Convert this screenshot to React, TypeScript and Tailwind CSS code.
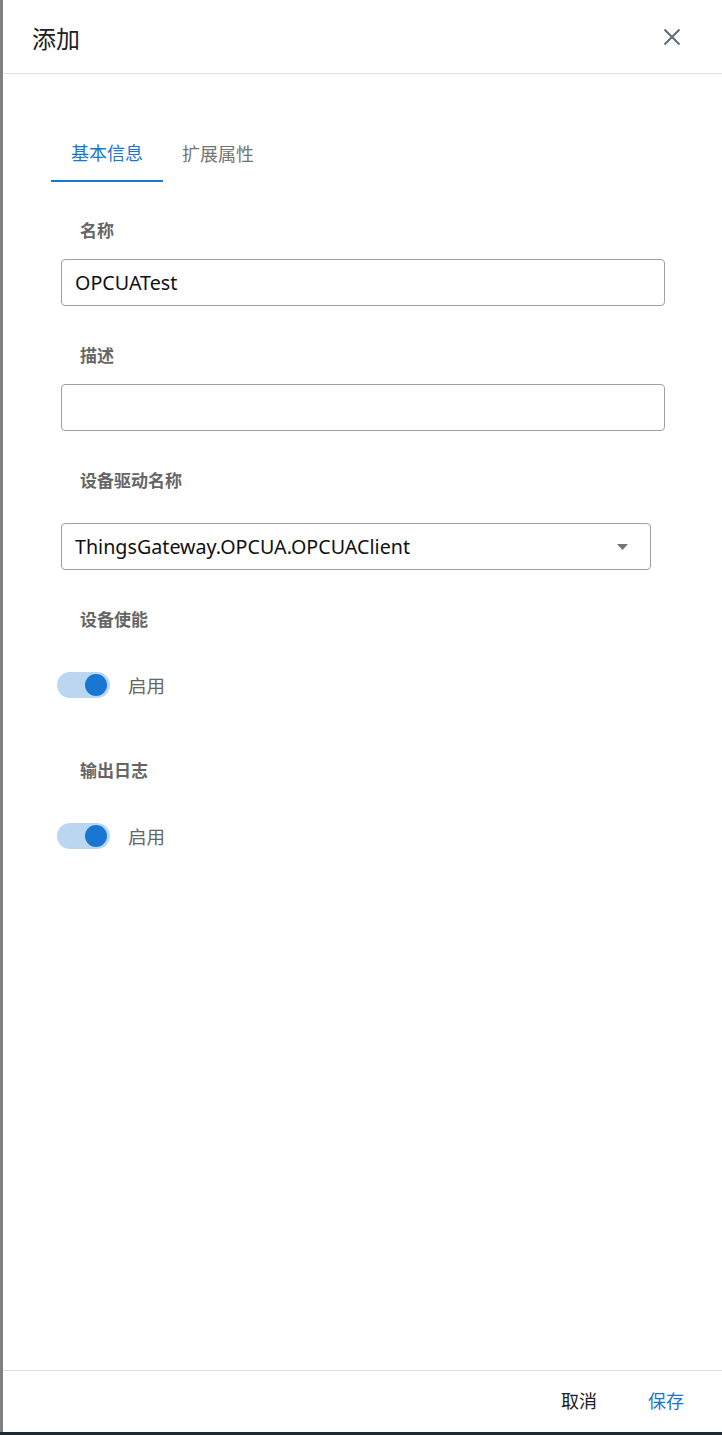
import React from "react";

const F = { fontFamily: '"Noto Sans", "Noto Sans CJK SC", sans-serif' };

function Label({ children, mt }: { children: React.ReactNode; mt: string }) {
  return (
    <div className={`${mt} pl-[77px] h-[24px] leading-[24px] text-[17px] font-bold text-[#666666]`}>{children}</div>
  );
}

function Toggle({ mt }: { mt: string }) {
  return (
    <div className={`${mt} flex items-center pl-[54px] h-[26px]`}>
      <div className="relative w-[53px] h-[26px] rounded-full bg-[#bad6f1]">
        <div className="absolute right-[3px] top-[2px] w-[22px] h-[22px] rounded-full bg-[#1976d2]" />
      </div>
      <span className="ml-[18px] text-[18.5px] text-[#666666] leading-[26px] mt-[2px]">启用</span>
    </div>
  );
}

export default function App() {
  return (
    <div className="w-[722px] h-[1435px] flex flex-col bg-white overflow-hidden" style={F}>
      <div className="flex flex-1 min-h-0">
        <div className="w-[3px] bg-[#808080]" />
        <div className="flex-1 flex flex-col bg-white">
          <div className="h-[74px] border-b border-[#e0e0e0] flex items-center justify-between pl-[29px] pr-[41px]">
            <span className="text-[24px] text-[#212121] leading-none mt-[4px]">添加</span>
            <svg width="18" height="18" viewBox="0 0 18 18" className="mt-[1px]">
              <path d="M1.5 1.5L16.5 16.5M16.5 1.5L1.5 16.5" stroke="#5f6b74" strokeWidth="2" />
            </svg>
          </div>
          <div className="mt-[60px] ml-[48px] flex h-[48px]">
            <div className="w-[112px] flex items-center justify-center pb-[8px] text-[18px] text-[#1976d2] border-b-2 border-[#1976d2]">基本信息</div>
            <div className="w-[110px] flex items-center justify-center pb-[8px] text-[18px] text-[#757575]">扩展属性</div>
          </div>
          <Label mt="mt-[37px]">名称</Label>
          <div className="mt-[16px] ml-[58px] w-[604px] h-[47px] border border-[#a0a0a0] rounded-[4px] flex items-center pl-[13px] text-[19.7px] text-[#111111]">
            OPCUATest
          </div>
          <Label mt="mt-[38px]">描述</Label>
          <div className="mt-[16px] ml-[58px] w-[604px] h-[47px] border border-[#a0a0a0] rounded-[4px]" />
          <Label mt="mt-[38px]">设备驱动名称</Label>
          <div className="mt-[30px] ml-[58px] w-[590px] h-[47px] border border-[#a0a0a0] rounded-[4px] flex items-center justify-between pl-[13px] pr-[22px] text-[19.7px] text-[#111111]">
            <span>ThingsGateway.OPCUA.OPCUAClient</span>
            <svg width="11" height="6" viewBox="0 0 11 6">
              <path d="M0 0H11L5.5 6Z" fill="#757575" />
            </svg>
          </div>
          <Label mt="mt-[38px]">设备使能</Label>
          <Toggle mt="mt-[40px]" />
          <Label mt="mt-[61px]">输出日志</Label>
          <Toggle mt="mt-[40px]" />
          <div className="flex-1" />
          <div className="h-[62px] border-t border-[#e0e0e0] flex items-center justify-end pr-[38px] gap-[51px] text-[18px]">
            <span className="text-[#212121]">取消</span>
            <span className="text-[#1976d2]">保存</span>
          </div>
        </div>
      </div>
      <div className="h-[3px] bg-[#1d2a35]" />
    </div>
  );
}
